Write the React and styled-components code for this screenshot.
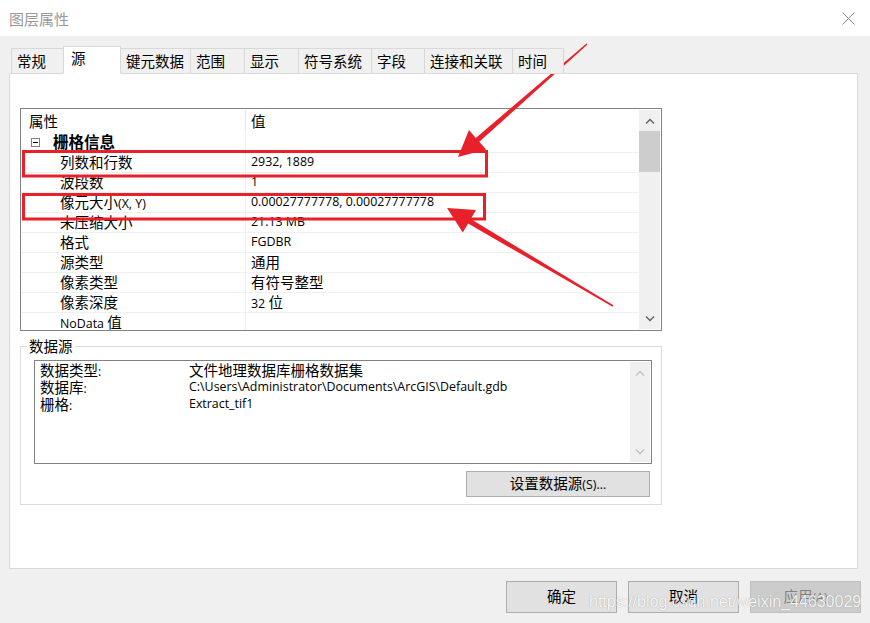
import React from 'react';
import styled, { createGlobalStyle } from 'styled-components';

const GlobalStyle = createGlobalStyle`
  html, body {
    margin: 0;
    padding: 0;
    background: #f0f0f0;
  }
  * {
    box-sizing: border-box;
  }
`;

const CJK_RE = /([\u2E80-\u9FFF\uFF00-\uFFEF]+)/;

// split mixed text so CJK runs get the larger YaHei-like size
const T = ({ children }) => (
  <span>
    {String(children)
      .split(CJK_RE)
      .filter(Boolean)
      .map((p, i) => (CJK_RE.test(p) ? <Cjk key={i}>{p}</Cjk> : p))}
  </span>
);

const tabs = [
  { label: '常规', w: 53 },
  { label: '源', w: 58, active: true },
  { label: '键元数据', w: 71 },
  { label: '范围', w: 55 },
  { label: '显示', w: 55 },
  { label: '符号系统', w: 74 },
  { label: '字段', w: 54 },
  { label: '连接和关联', w: 89 },
  { label: '时间', w: 52 },
];

const rows = [
  ['列数和行数', '2932, 1889'],
  ['波段数', '1'],
  ['像元大小(X, Y)', '0.00027777778, 0.00027777778'],
  ['未压缩大小', '21.13 MB'],
  ['格式', 'FGDBR'],
  ['源类型', '通用'],
  ['像素类型', '有符号整型'],
  ['像素深度', '32 位'],
  ['NoData 值', ''],
];

const sourceInfo = [
  ['数据类型:', '文件地理数据库栅格数据集'],
  ['数据库:', 'C:\\Users\\Administrator\\Documents\\ArcGIS\\Default.gdb'],
  ['栅格:', 'Extract_tif1'],
];

const Chevron = ({ up, color }) => (
  <svg width="10" height="6" viewBox="0 0 10 6">
    <path
      d={up ? 'M1 5.5 L5 1.5 L9 5.5' : 'M1 0.5 L5 4.5 L9 0.5'}
      fill="none"
      stroke={color}
      strokeWidth="1.4"
    />
  </svg>
);

const arrow = (sx, sy, tx, ty, headLen, headHalf) => {
  const dx = tx - sx;
  const dy = ty - sy;
  const len = Math.hypot(dx, dy);
  const ux = dx / len;
  const uy = dy / len;
  const px = -uy;
  const py = ux;
  const bx = tx - ux * headLen;
  const by = ty - uy * headLen;
  const pts = [
    [sx + px * 0.8, sy + py * 0.8],
    [bx + px * 2.6, by + py * 2.6],
    [bx + px * headHalf, by + py * headHalf],
    [tx, ty],
    [bx - px * headHalf, by - py * headHalf],
    [bx - px * 2.6, by - py * 2.6],
    [sx - px * 0.8, sy - py * 0.8],
  ];
  return pts.map((p) => p.map((v) => v.toFixed(1)).join(',')).join(' ');
};

const App = () => {
  return (
    <Page>
      <GlobalStyle />
      <TitleBar>
        <Title>图层属性</Title>
        <CloseBtn>
          <svg width="13" height="13" viewBox="0 0 13 13">
            <path d="M0.5 0.5 L12.5 12.5 M12.5 0.5 L0.5 12.5" stroke="#8a8a8a" strokeWidth="1" />
          </svg>
        </CloseBtn>
      </TitleBar>

      <Body>
        <TabStrip>
          {tabs.map((t) => (
            <Tab key={t.label} w={t.w} active={t.active}>
              <Cjk>{t.label}</Cjk>
            </Tab>
          ))}
        </TabStrip>

        <Panel>
          <PropGrid>
            <GridContent>
              <HeaderRow>
                <HeadCell first><Cjk>属性</Cjk></HeadCell>
                <HeadCell><Cjk>值</Cjk></HeadCell>
              </HeaderRow>
              <GroupRow>
                <NameCell indent={10}>
                  <svg width="9" height="9" viewBox="0 0 9 9">
                    <rect x="0.5" y="0.5" width="8" height="8" fill="#fff" stroke="#808080" />
                    <path d="M2 4.5 H7" stroke="#000" />
                  </svg>
                  <GroupTitle>栅格信息</GroupTitle>
                </NameCell>
                <ValueCell />
              </GroupRow>
              {rows.map(([k, v]) => (
                <Row key={k}>
                  <NameCell indent={39}><T>{k}</T></NameCell>
                  <ValueCell>{v && <T>{v}</T>}</ValueCell>
                </Row>
              ))}
            </GridContent>
            <ScrollBar>
              <ScrollArrow><Chevron up color="#606060" /></ScrollArrow>
              <Thumb />
              <ScrollTrack />
              <ScrollArrow><Chevron color="#606060" /></ScrollArrow>
            </ScrollBar>
          </PropGrid>

          <GroupBox>
            <GroupLabel>数据源</GroupLabel>
            <ListBox>
              <ListContent>
                {sourceInfo.map(([k, v]) => (
                  <InfoLine key={k}>
                    <InfoKey><T>{k}</T></InfoKey>
                    <T>{v}</T>
                  </InfoLine>
                ))}
              </ListContent>
              <ScrollBar light>
                <ScrollArrow><Chevron up color="#c4c4c4" /></ScrollArrow>
                <ScrollTrack />
                <ScrollArrow><Chevron color="#c4c4c4" /></ScrollArrow>
              </ScrollBar>
            </ListBox>
            <SourceButton><T>设置数据源(S)...</T></SourceButton>
          </GroupBox>
        </Panel>

        <Footer>
          <DialogButton><T>确定</T></DialogButton>
          <DialogButton><T>取消</T></DialogButton>
          <DialogButton disabled><T>应用(A)</T></DialogButton>
        </Footer>
      </Body>

      <Annotations width="870" height="623" viewBox="0 0 870 623">
        <rect x="23.5" y="151.5" width="463" height="24.5" fill="none" stroke="#e8202a" strokeWidth="3" />
        <rect x="23.5" y="194.5" width="461" height="24.5" fill="none" stroke="#e8202a" strokeWidth="3" />
        <polygon points={arrow(587, 44, 458, 157, 26, 13)} fill="#e8202a" />
        <polygon points={arrow(613, 306, 447, 208, 26, 13)} fill="#e8202a" />
      </Annotations>

      <Watermark>https://blog.csdn.net/weixin_44630029</Watermark>
    </Page>
  );
};
export default App;

const Page = styled.div`
  position: relative;
  width: 870px;
  height: 623px;
  overflow: hidden;
  background: #f0f0f0;
  font-family: "Open Sans", "Noto Sans CJK SC", sans-serif;
  font-size: 12.4px;
  color: #000;
`

const Cjk = styled.span`
  font-family: "Noto Sans CJK SC", sans-serif;
  font-size: 14.5px;
`

const TitleBar = styled.div`
  height: 36px;
  background: #fff;
  display: flex;
  align-items: center;
  justify-content: space-between;
  padding: 0 15px 0 9px;
`

const Title = styled.div`
  font-family: "Noto Sans CJK SC", sans-serif;
  font-size: 15px;
  color: #9a9a9a;
`

const CloseBtn = styled.div`
  display: flex;
  margin-top: 1px;
`

const Body = styled.div`
  padding: 10px 0 0 9px;
`

const TabStrip = styled.div`
  display: flex;
  align-items: flex-end;
  height: 28px;
  margin-left: 2px;
  margin-bottom: -1px;
  position: relative;
  z-index: 1;
`

const Tab = styled.div`
  width: ${(p) => p.w}px;
  height: ${(p) => (p.active ? 28 : 26)}px;
  margin-right: -1px;
  padding-left: ${(p) => (p.active ? 7 : 5)}px;
  display: flex;
  align-items: center;
  background: ${(p) => (p.active ? '#fff' : '#f0f0f0')};
  border: 1px solid #d9d9d9;
  border-bottom-color: ${(p) => (p.active ? '#fff' : '#d9d9d9')};
  position: relative;
  z-index: ${(p) => (p.active ? 2 : 1)};
  line-height: 1;
  padding-bottom: ${(p) => (p.active ? 3 : 0)}px;
`

const Panel = styled.div`
  width: 849px;
  height: 496px;
  background: #fff;
  border: 1px solid #d9d9d9;
  padding: 34px 0 0 10px;
`

const PropGrid = styled.div`
  width: 642px;
  height: 223px;
  border: 1px solid #828282;
  display: flex;
  overflow: hidden;
`

const GridContent = styled.div`
  flex: 1;
  display: flex;
  flex-direction: column;
  overflow: hidden;
`

const HeaderRow = styled.div`
  display: flex;
  height: 22px;
  flex-shrink: 0;
`

const HeadCell = styled.div`
  width: ${(p) => (p.first ? '225px' : 'auto')};
  flex: ${(p) => (p.first ? 'none' : '1')};
  padding-left: ${(p) => (p.first ? 8 : 5)}px;
  border-right: ${(p) => (p.first ? '1px solid #e5e5e5' : 'none')};
  display: flex;
  align-items: center;
  margin-top: 1px;
`

const Row = styled.div`
  display: flex;
  height: 20px;
  flex-shrink: 0;
  border-bottom: 1px solid #f0f0f0;
`

const GroupRow = styled(Row)`
  height: 22px;
  border-top: 1px solid #fff;
`

const NameCell = styled.div`
  width: 225px;
  flex: none;
  padding-left: ${(p) => p.indent}px;
  border-right: 1px solid #f0f0f0;
  display: flex;
  align-items: center;
  white-space: nowrap;
  line-height: 1;
`

const GroupTitle = styled.span`
  font-family: "Noto Sans CJK SC", sans-serif;
  font-size: 15.5px;
  font-weight: bold;
  margin-left: 13px;
`

const ValueCell = styled.div`
  flex: 1;
  padding-left: 5px;
  display: flex;
  align-items: center;
  white-space: nowrap;
  line-height: 1;
`

const ScrollBar = styled.div`
  width: ${(p) => (p.light ? 20 : 21)}px;
  margin: 1px 1px 1px 0;
  background: #f0f0f0;
  display: flex;
  flex-direction: column;
`

const ScrollArrow = styled.div`
  height: 21px;
  display: flex;
  align-items: center;
  justify-content: center;
  flex-shrink: 0;
`

const Thumb = styled.div`
  height: 41px;
  background: #cdcdcd;
  flex-shrink: 0;
`

const ScrollTrack = styled.div`
  flex: 1;
`

const GroupBox = styled.div`
  position: relative;
  width: 642px;
  margin-top: 15px;
  border: 1px solid #dcdcdc;
  padding: 13px 10px 7px 13px;
  display: flex;
  flex-direction: column;
  align-items: flex-end;
`

const GroupLabel = styled.span`
  position: absolute;
  top: -11px;
  left: 6px;
  padding: 0 2px;
  background: #fff;
  font-family: "Noto Sans CJK SC", sans-serif;
  font-size: 14.5px;
  line-height: 20px;
`

const ListBox = styled.div`
  width: 618px;
  height: 104px;
  border: 1px solid #828282;
  display: flex;
  align-self: flex-start;
`

const ListContent = styled.div`
  flex: 1;
  padding: 1px 5px;
`

const InfoLine = styled.div`
  display: flex;
  height: 17px;
  align-items: center;
  line-height: 1;
  white-space: nowrap;
`

const InfoKey = styled.span`
  width: 149px;
  flex: none;
`

const SourceButton = styled.div`
  width: 184px;
  height: 26px;
  margin-top: 7px;
  margin-right: 1px;
  background: #e1e1e1;
  border: 1px solid #adadad;
  display: flex;
  align-items: center;
  justify-content: center;
  line-height: 1;
`

const Footer = styled.div`
  display: flex;
  justify-content: flex-end;
  gap: 11px;
  margin-top: 12px;
  padding-right: 9px;
`

const DialogButton = styled.div`
  width: 111px;
  height: 32px;
  background: ${(p) => (p.disabled ? '#cccccc' : '#e1e1e1')};
  border: 1px solid ${(p) => (p.disabled ? '#bfbfbf' : '#adadad')};
  color: ${(p) => (p.disabled ? '#838383' : '#000')};
  display: flex;
  align-items: center;
  justify-content: center;
  line-height: 1;
`

const Annotations = styled.svg`
  position: absolute;
  top: 0;
  left: 0;
  pointer-events: none;
`

const Watermark = styled.div`
  position: absolute;
  left: 589px;
  top: 593px;
  font-family: "Liberation Sans", Arial, sans-serif;
  font-size: 16px;
  color: rgba(255, 255, 255, 0.92);
  text-shadow: 0 0 1px rgba(0, 0, 0, 0.35);
  white-space: nowrap;
  pointer-events: none;
`
